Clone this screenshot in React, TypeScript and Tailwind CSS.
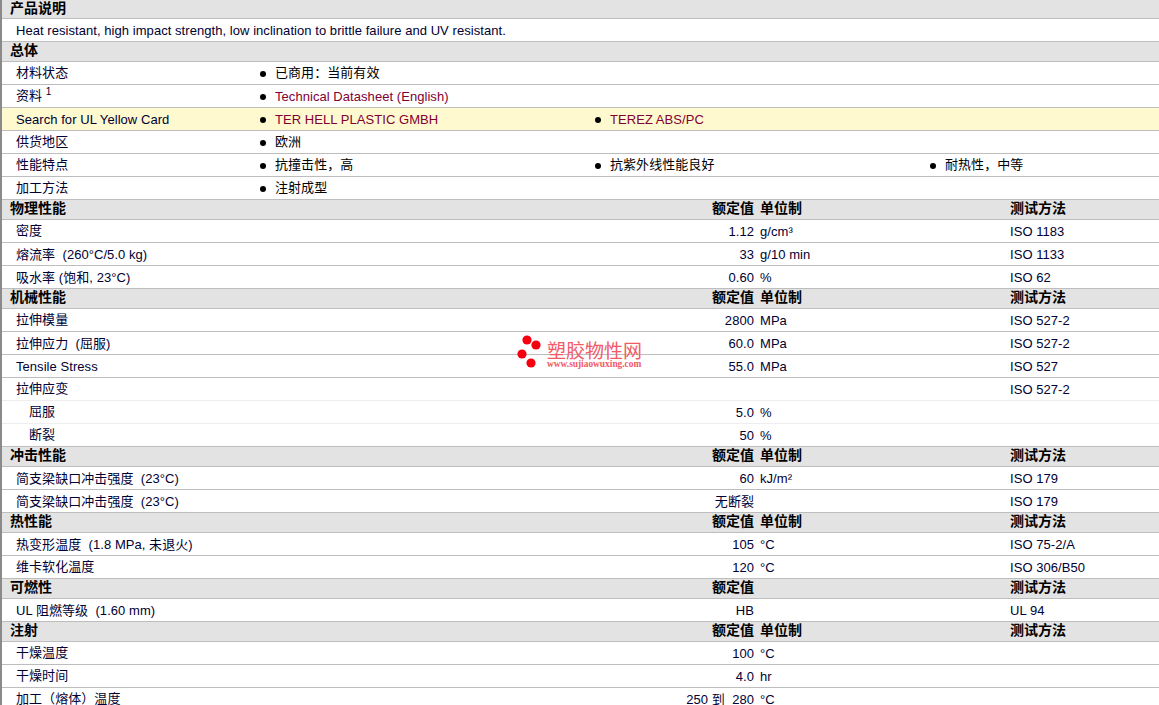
const F = "font-['Liberation_Sans','Noto_Sans_CJK_SC',sans-serif]";
const dataCols = "grid grid-cols-[632px_120px_250px_1fr]";
const bulletCols = "grid grid-cols-[258px_335px_335px_1fr]";

const isCjk = (s?: string) => !!s && /^[^\x00-\x7f]+$/.test(s);

function Section({ title, h = "h-5", value, unit, method }: { title: string; h?: string; value?: string; unit?: string; method?: string }) {
  return (
    <div className={`${dataCols} ${h} items-center bg-[#e3e3e3] border-b border-[#bdbdbd] pb-[3px] text-[14px] font-bold text-black tracking-normal`}>
      <div className="pl-2">{title}</div>
      <div className="text-right">{value}</div>
      <div className="pl-[6px]">{unit}</div>
      <div className="pl-[6px]">{method}</div>
    </div>
  );
}

function Bullet({ text, link }: { text: string; link?: boolean }) {
  return (
    <div className="flex items-center">
      <span className="w-[6px] h-[6px] rounded-full bg-black mr-[9px]" />
      <span className={`${link ? "text-[#800033]" : "text-black"} ${isCjk(text) ? "-translate-y-px" : ""}`}>{text}</span>
    </div>
  );
}

function BulletRow({ label, items, yellow }: { label: React.ReactNode; items: { text: string; link?: boolean }[]; yellow?: boolean }) {
  return (
    <div className={`${bulletCols} h-[23px] items-center border-b border-[#bdbdbd] pt-px ${yellow ? "bg-[#fff9cf]" : "bg-white"}`}>
      <div className={`pl-[14px] text-[#000033] ${typeof label === "string" && !isCjk(label) ? "" : "-translate-y-px"}`}>{label}</div>
      {items.map((it) => (
        <Bullet key={it.text} {...it} />
      ))}
    </div>
  );
}

function Row({ label, value, unit, method, light, indent }: { label: string; value?: string; unit?: string; method?: string; light?: boolean; indent?: boolean }) {
  return (
    <div className={`${dataCols} h-[23px] items-center border-b pt-px bg-white text-[#000033] whitespace-pre ${light ? "border-[#eeeeee]" : "border-[#bdbdbd]"}`}>
      <div className={`${indent ? "pl-[27px]" : "pl-[14px]"} ${isCjk(label) ? "-translate-y-px" : ""}`}>{label}</div>
      <div className="text-right">{value}</div>
      <div className="pl-[6px]">{unit}</div>
      <div className="pl-[6px]">{method}</div>
    </div>
  );
}

const headers = { value: "额定值", unit: "单位制", method: "测试方法" };

export default function App() {
  return (
    <div className={`relative h-[705px] w-[1159px] overflow-hidden border-l-2 border-[#8a8a8a] bg-white text-[13px] tracking-[0.055px] leading-none ${F}`}>
      <Section title="产品说明" h="h-[19px]" />
      <div className="flex h-[23px] items-center border-b border-[#bdbdbd] pl-[14px] pt-px text-[#000033]">
        Heat resistant, high impact strength, low inclination to brittle failure and UV resistant.
      </div>
      <Section title="总体" />
      <BulletRow label="材料状态" items={[{ text: "已商用：当前有效" }]} />
      <BulletRow
        label={
          <span>
            资料 <sup className="text-[10px]">1</sup>
          </span>
        }
        items={[{ text: "Technical Datasheet (English)", link: true }]}
      />
      <BulletRow
        yellow
        label="Search for UL Yellow Card"
        items={[
          { text: "TER HELL PLASTIC GMBH", link: true },
          { text: "TEREZ ABS/PC", link: true },
        ]}
      />
      <BulletRow label="供货地区" items={[{ text: "欧洲" }]} />
      <BulletRow label="性能特点" items={[{ text: "抗撞击性，高" }, { text: "抗紫外线性能良好" }, { text: "耐热性，中等" }]} />
      <BulletRow label="加工方法" items={[{ text: "注射成型" }]} />

      <Section title="物理性能" {...headers} />
      <Row label="密度" value="1.12" unit="g/cm³" method="ISO 1183" />
      <Row label="熔流率  (260°C/5.0 kg)" value="33" unit="g/10 min" method="ISO 1133" />
      <Row label="吸水率 (饱和, 23°C)" value="0.60" unit="%" method="ISO 62" />

      <Section title="机械性能" {...headers} />
      <Row label="拉伸模量" value="2800" unit="MPa" method="ISO 527-2" />
      <Row label="拉伸应力  (屈服)" value="60.0" unit="MPa" method="ISO 527-2" />
      <Row label="Tensile Stress" value="55.0" unit="MPa" method="ISO 527" />
      <Row label="拉伸应变" method="ISO 527-2" light />
      <Row label="屈服" value="5.0" unit="%" light indent />
      <Row label="断裂" value="50" unit="%" indent />

      <Section title="冲击性能" {...headers} />
      <Row label="简支梁缺口冲击强度  (23°C)" value="60" unit="kJ/m²" method="ISO 179" />
      <Row label="简支梁缺口冲击强度  (23°C)" value="无断裂" method="ISO 179" />

      <Section title="热性能" {...headers} />
      <Row label="热变形温度  (1.8 MPa, 未退火)" value="105" unit="°C" method="ISO 75-2/A" />
      <Row label="维卡软化温度" value="120" unit="°C" method="ISO 306/B50" />

      <Section title="可燃性" value="额定值" method="测试方法" />
      <Row label="UL 阻燃等级  (1.60 mm)" value="HB" method="UL 94" />

      <Section title="注射" {...headers} />
      <Row label="干燥温度" value="100" unit="°C" />
      <Row label="干燥时间" value="4.0" unit="hr" />
      <Row label="加工（熔体）温度" value="250 到  280" unit="°C" />

      <div className="absolute left-[514px] top-[334px] flex items-start">
        <svg width="28" height="36" viewBox="0 0 28 36" className="shrink-0">
          <circle cx="11" cy="6" r="4.6" fill="#f5000f" />
          <circle cx="20" cy="11" r="4.6" fill="#f5000f" />
          <circle cx="6" cy="20" r="4.6" fill="#f5000f" />
          <circle cx="15" cy="29" r="4.6" fill="#f5000f" />
        </svg>
        <div className="ml-[3px] mt-[7px] flex w-[96px] flex-col">
          <span className="h-[18px] text-[19px] leading-[18px] tracking-[0px] text-[#f25a66] font-['Noto_Sans_CJK_SC',sans-serif]">塑胶物性网</span>
          <span className="mt-px whitespace-nowrap text-[9.4px] font-bold leading-[9px] tracking-normal text-[#f25a66] font-['Liberation_Serif',serif]">www.sujiaowuxing.com</span>
        </div>
      </div>
    </div>
  );
}
